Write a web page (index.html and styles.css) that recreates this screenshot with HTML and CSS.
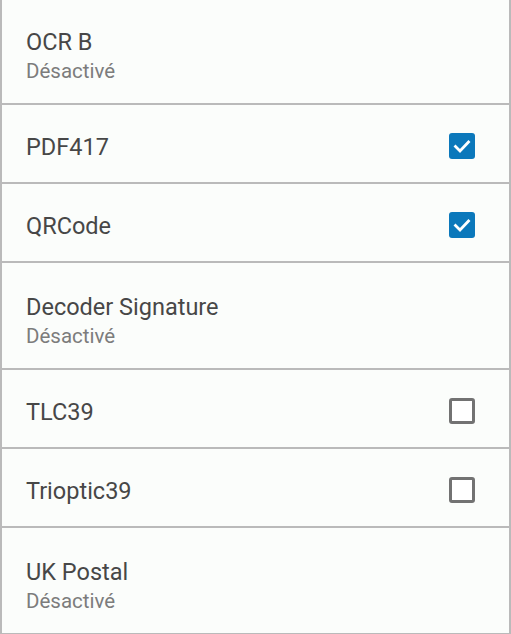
FILE: index.html
```html
<!DOCTYPE html>
<html lang="fr">
<head>
    <meta charset="UTF-8">
    <meta name="viewport" content="width=device-width, initial-scale=1.0">
    <title>Symbologies</title>
    <link rel="stylesheet" href="styles.css">
</head>
<body>
    <ul class="settings-list">
        <li class="setting two-line">
            <div class="setting-text">
                <span class="setting-title">OCR B</span>
                <span class="setting-summary">Désactivé</span>
            </div>
        </li>
        <li class="setting">
            <div class="setting-text">
                <span class="setting-title">PDF417</span>
            </div>
            <span class="checkbox checked">
                <svg viewBox="0 0 26 26" width="26" height="26"><path d="M6.5 13.5 L11 18 L19.5 9" fill="none" stroke="#fff" stroke-width="2.8" stroke-linecap="square"/></svg>
            </span>
        </li>
        <li class="setting">
            <div class="setting-text">
                <span class="setting-title">QRCode</span>
            </div>
            <span class="checkbox checked">
                <svg viewBox="0 0 26 26" width="26" height="26"><path d="M6.5 13.5 L11 18 L19.5 9" fill="none" stroke="#fff" stroke-width="2.8" stroke-linecap="square"/></svg>
            </span>
        </li>
        <li class="setting two-line">
            <div class="setting-text">
                <span class="setting-title">Decoder Signature</span>
                <span class="setting-summary">Désactivé</span>
            </div>
        </li>
        <li class="setting">
            <div class="setting-text">
                <span class="setting-title">TLC39</span>
            </div>
            <span class="checkbox"></span>
        </li>
        <li class="setting">
            <div class="setting-text">
                <span class="setting-title">Trioptic39</span>
            </div>
            <span class="checkbox"></span>
        </li>
        <li class="setting two-line">
            <div class="setting-text">
                <span class="setting-title">UK Postal</span>
                <span class="setting-summary">Désactivé</span>
            </div>
        </li>
    </ul>
</body>
</html>
```

FILE: styles.css
```css
body {
    margin: 0;
    background-color: #fbfdfb;
    font-family: Roboto, "Noto Sans", sans-serif;
}

.settings-list {
    list-style: none;
    margin: -2px 0 0 0;
    padding: 0;
    border-left: 2px solid #bababa;
    border-right: 2px solid #bababa;
}

.setting {
    display: flex;
    align-items: center;
    height: 77px;
    padding: 0 34px 0 24px;
    border-bottom: 2px solid #bababa;
}

.setting.two-line {
    height: 105px;
    align-items: flex-start;
}

.setting-text {
    flex: 1;
    display: flex;
    flex-direction: column;
}

.two-line .setting-text {
    padding-top: 30px;
}

.setting-title {
    font-size: 23.5px;
    line-height: 28px;
    color: #474747;
}

.setting .setting-title {
    margin-top: 6px;
}

.two-line .setting-title {
    margin-top: 0;
}

.setting-summary {
    font-size: 20.5px;
    line-height: 28px;
    margin-top: 1px;
    color: #7c7c7c;
}

.checkbox {
    box-sizing: border-box;
    width: 26px;
    height: 26px;
    margin-top: 5px;
    border: 3px solid #727272;
    border-radius: 3px;
    background-color: #fff;
}

.checkbox.checked {
    border: none;
    background-color: #0b78bb;
}

.checkbox svg {
    display: block;
}
```
